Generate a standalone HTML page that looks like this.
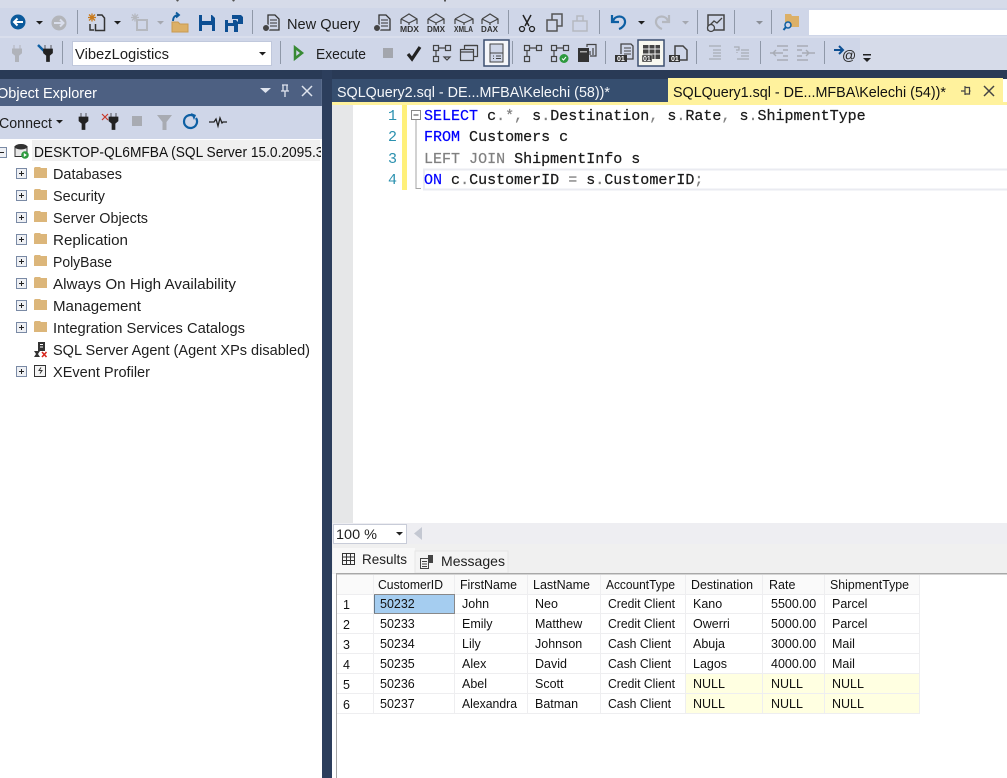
<!DOCTYPE html>
<html><head><meta charset="utf-8"><title>SSMS</title>
<style>
html,body{margin:0;padding:0;background:#fff;overflow:hidden}
svg{display:block}
text{font-family:"Liberation Sans",sans-serif;fill:#1e1e1e;white-space:pre}
.t{font-size:14.5px}
.g{font-size:12.5px;fill:#111}
.m{font-family:"Liberation Mono",monospace;font-size:15.03px;stroke:#000;stroke-width:.2px}
.k{fill:#0000ff;stroke:#0000ff}.y{fill:#808080;stroke:#808080}
.n{font-family:"Liberation Mono",monospace;font-size:15px;fill:#2b91af}
.o{font-size:7px;font-weight:bold;fill:#fff}
</style></head><body>
<svg width="1007" height="778" viewBox="0 0 1007 778" xmlns="http://www.w3.org/2000/svg">
<!-- chrome backgrounds -->
<rect width="1007" height="778" fill="#fff"/>
<rect width="1007" height="8" fill="#d6dbe9"/>
<path d="M176 0l1 1.500h1l1-1.500M232 0l1 1.500h1l1-1.500M444 0h2v1.500h-2z" fill="#555"/>
<rect y="8" width="1007" height="29" fill="#cfd6e8"/>
<rect y="37" width="1007" height="33" fill="#cfd6e8"/>
<rect y="36" width="1007" height="2" fill="#d9deec"/>
<rect x="860" y="38" width="147" height="32" fill="#d6dbe9"/>
<rect y="70" width="1007" height="9" fill="#293a56"/>
<rect x="322" y="70" width="10" height="708" fill="#2c3e5c"/>
<rect x="809" y="10" width="198" height="25" fill="#fff"/>

<!-- toolbar 1 -->
<circle cx="18" cy="22" r="7.500" fill="#0b5a9c"/><path d="M23 22H14M17.500 18.500L14 22l3.500 3.500" stroke="#fff" stroke-width="2" fill="none"/>
<path d="M36 21h7l-3.500 3.500z" fill="#1e1e1e"/>
<circle cx="59" cy="23" r="7.500" fill="#b3b5ba"/><path d="M54 23h9M60 19.500l3.500 3.500-3.500 3.500" stroke="#d9deec" stroke-width="2" fill="none"/>
<rect x="77" y="10" width="1" height="24" fill="#8f98a8"/>
<path d="M92 13.500v8M88 17.500h8M89 14.500l6 6M95 14.500l-6 6" stroke="#c97a1a" stroke-width="1.300"/>
<path d="M97 15h5l2.500 3v12.500h-9V24M90 24v6h4" stroke="#333" stroke-width="1.500" fill="none"/>
<path d="M114 21h7l-3.500 3.500z" fill="#1e1e1e"/>
<path d="M135 13.500v8M131 17.500h8M132 14.500l6 6M138 14.500l-6 6" stroke="#b5b8bf" stroke-width="1.300"/>
<rect x="137" y="20" width="10" height="10" fill="none" stroke="#b5b8bf" stroke-width="2"/>
<path d="M157 21h7l-3.500 3.500z" fill="#a5a8b0"/>
<path d="M172 22h6l2 2h8v8h-16z" fill="#dcb067" stroke="#c89a50"/>
<path d="M173 21c0-4 2-6 6-6M176 12.500l3 2.500-3 2.500" stroke="#0b5a9c" stroke-width="1.800" fill="none"/>
<path d="M199 15h13l3 3v13h-16z" fill="#0d4f93"/><rect x="202" y="15" width="9" height="6" fill="#cfd6e8"/><rect x="202" y="25" width="10" height="6" fill="#cfd6e8"/>
<path d="M225 20h11l2 2v10h-13z" fill="#0d4f93"/><rect x="228" y="26" width="6" height="6" fill="#cfd6e8"/><rect x="228" y="20" width="5" height="3" fill="#cfd6e8"/>
<path d="M232 15h9l2 2v7h-5v-5h-6z" fill="#0d4f93"/>
<rect x="252" y="10" width="1" height="24" fill="#8f98a8"/>
<path d="M268 15h7l4 4v11h-11z" fill="none" stroke="#333" stroke-width="1.300"/><path d="M270 20h7M270 23h7M270 26h7" stroke="#333"/>
<ellipse cx="266" cy="28" rx="3.500" ry="3.500" fill="#444" stroke="#cfd6e8"/>
<text class="t" x="287" y="29" textLength="73" lengthAdjust="spacingAndGlyphs">New Query</text>
<path d="M379 15h7l4 4v11h-11z" fill="none" stroke="#333" stroke-width="1.300"/><path d="M381 20h7M381 23h7M381 26h7" stroke="#333"/>
<ellipse cx="377" cy="28" rx="3.500" ry="3.500" fill="#444" stroke="#cfd6e8"/>
<g fill="none" stroke="#444" stroke-width="1.200">
<path d="M401 19l8-5 8 5v5M401 19v5M401 19l8 4 8-4M409 23v2"/>
<path d="M428 19l8-5 8 5v5M428 19v5M428 19l8 4 8-4M436 23v2"/>
<path d="M455 19l9-5 9 5v5M455 19v5M455 19l9 4 9-4M464 23v2"/>
<path d="M482 19l8-5 8 5v5M482 19v5M482 19l8 4 8-4M490 23v2"/>
</g>
<g font-weight="bold"><text x="400" y="32" font-size="8" textLength="19" lengthAdjust="spacingAndGlyphs" style="fill:#333">MDX</text>
<text x="427" y="32" font-size="8" textLength="18" lengthAdjust="spacingAndGlyphs" style="fill:#333">DMX</text>
<text x="454" y="32" font-size="8" textLength="19" lengthAdjust="spacingAndGlyphs" style="fill:#333">XMLA</text>
<text x="481" y="32" font-size="8" textLength="17" lengthAdjust="spacingAndGlyphs" style="fill:#333">DAX</text></g>
<rect x="508" y="10" width="1" height="24" fill="#8f98a8"/>
<path d="M523 15l6 11M531 15l-6 11" stroke="#222" stroke-width="1.500"/><circle cx="522" cy="29" r="2.500" fill="none" stroke="#222" stroke-width="1.300"/><circle cx="532" cy="29" r="2.500" fill="none" stroke="#222" stroke-width="1.300"/>
<path d="M552 20v-6h10v12h-5" fill="none" stroke="#555" stroke-width="1.500"/><rect x="547" y="20" width="10" height="11" fill="none" stroke="#555" stroke-width="1.500"/>
<path d="M573 21h14v10h-14zM577 21v-5h6v5" fill="none" stroke="#b5b8bf" stroke-width="1.500"/>
<rect x="599" y="10" width="1" height="24" fill="#8f98a8"/>
<path d="M612 15v7h7M613 21c2-6 11-6 12 0 .500 4-3 7-6 8" fill="none" stroke="#0d5fa3" stroke-width="2.200"/>
<path d="M638 21h7l-3.500 3.500z" fill="#1e1e1e"/>
<path d="M669 15v7h-7M668 21c-2-6-11-6-12 0-.500 4 3 7 6 8" fill="none" stroke="#b5b8bf" stroke-width="2.200"/>
<path d="M682 21h7l-3.500 3.500z" fill="#a5a8b0"/>
<rect x="697" y="10" width="1" height="24" fill="#8f98a8"/>
<rect x="708" y="15" width="16" height="15" fill="none" stroke="#444" stroke-width="1.500"/><path d="M710 25l4-4 3 2 5-5" fill="none" stroke="#444" stroke-width="1.300"/><circle cx="711" cy="28" r="3.500" fill="#cfd6e8" stroke="#444" stroke-width="1.300"/>
<rect x="734" y="10" width="1" height="24" fill="#8f98a8"/>
<path d="M756 21h7l-3.500 3.500z" fill="#8a8e96"/>
<rect x="771" y="10" width="1" height="24" fill="#8f98a8"/>
<path d="M785 14h6l1 2h7v11h-14z" fill="#dcb067"/><circle cx="788" cy="25" r="3" fill="#cfd6e8" stroke="#0d5fa3" stroke-width="1.500"/><path d="M786 27l-2.500 3" stroke="#0d5fa3" stroke-width="2"/>

<!-- toolbar 2 -->
<path d="M14 45v4M20 45v4M12.500 49h9v4l-3 2.500v6h-3v-6l-3-2.500z" fill="#b0b3ba" stroke="#b0b3ba"/>
<path d="M38 45l7 7" stroke="#0d5fa3" stroke-width="2.500"/><path d="M45 45v4M51 45v4M43.500 49h9v4l-3 2.500v6h-3v-6l-3-2.500z" fill="#222" stroke="#222" stroke-width=".7"/>
<rect x="62" y="41" width="1" height="23" fill="#8f98a8"/>
<rect x="72.500" y="41.500" width="199" height="24" fill="#fff" stroke="#c0c8dc"/>
<text class="t" x="75" y="59" textLength="94" lengthAdjust="spacingAndGlyphs">VibezLogistics</text>
<path d="M259 52h7l-3.500 3.500z" fill="#1e1e1e"/>
<rect x="280" y="41" width="1" height="23" fill="#8f98a8"/>
<path d="M295 47.500l7 5.500-7 5.500z" fill="none" stroke="#388a34" stroke-width="2.500"/>
<text class="t" x="316" y="59" textLength="50" lengthAdjust="spacingAndGlyphs">Execute</text>
<rect x="383" y="48" width="10" height="10" fill="#a3a6ad"/>
<path d="M408 54l4 5 8-12" fill="none" stroke="#222" stroke-width="3.200"/>
<g fill="none" stroke="#444" stroke-width="1.200">
<rect x="433.500" y="45.500" width="5" height="5"/><rect x="445.500" y="45.500" width="5" height="5"/><rect x="433.500" y="56.500" width="5" height="5"/><path d="M439 48h6M436 51v5M444 57h6l-3 3z"/>
<rect x="464.500" y="45.500" width="13" height="11"/><rect x="460.500" y="49.500" width="13" height="11" fill="#cfd6e8"/><path d="M461 52h12M465 45.500h12"/>
</g>
<rect x="484" y="40" width="25" height="26" fill="#f5f6fa" stroke="#3c4f70" stroke-width="1.500"/>
<rect x="490" y="44" width="13" height="18" fill="#cfd6e8" stroke="#444"/><path d="M490 53h13M493 56h1M493 58.500h1M496 56h5M496 58.500h5" stroke="#444"/>
<rect x="512" y="41" width="1" height="23" fill="#8f98a8"/>
<g fill="none" stroke="#444" stroke-width="1.200">
<rect x="524.500" y="45.500" width="5" height="5"/><rect x="536.500" y="45.500" width="5" height="5"/><rect x="524.500" y="56.500" width="5" height="5"/><path d="M530 48h6M527 51v5"/>
<rect x="551.500" y="45.500" width="5" height="5"/><rect x="563.500" y="45.500" width="5" height="5"/><rect x="551.500" y="56.500" width="5" height="5"/><path d="M557 48h6M554 51v5"/>
<path d="M587 47v-2.500h9v11.500h-6M590 55v-4M593 55v-7"/>
</g>
<circle cx="564" cy="58.500" r="4.500" fill="#2e9a3e"/><path d="M562 58.500l1.500 1.500 2.500-3" stroke="#fff" fill="none"/>
<rect x="578" y="48" width="11" height="14" fill="#333"/><rect x="580" y="51" width="7" height="1.500" fill="#aaa"/>
<rect x="605" y="41" width="1" height="23" fill="#8f98a8"/>
<path d="M621 54v-10h10l2 2v13h-6" fill="none" stroke="#444" stroke-width="1.300"/><path d="M624 48h7M624 51h7M624 54h7" stroke="#444"/>
<rect x="615" y="55" width="12" height="7" fill="#333"/><text class="o" x="617" y="61">01</text>
<rect x="638" y="40" width="26" height="26" fill="#f8f8f0" stroke="#3c4f70" stroke-width="1.500"/>
<rect x="643" y="45" width="17" height="14" fill="#444"/><path d="M643 49h17M643 54h17M649 45v14M655 45v14" stroke="#eee"/>
<rect x="642" y="55" width="10" height="7" fill="#333" stroke="#f8f8f0" stroke-width=".5"/><text class="o" x="643" y="61">01</text>
<path d="M675 55v-9h8l4 4v10h-7" fill="none" stroke="#444" stroke-width="1.500"/><rect x="669" y="55" width="11" height="7" fill="#333"/><text class="o" x="671" y="61">01</text>
<rect x="696" y="41" width="1" height="23" fill="#8f98a8"/>
<path d="M709 46h12M713 50h8M713 53h8M713 56h8M709 59h12" stroke="#a8acb5" stroke-width="1.200"/>
<path d="M734 47h5v3h-3M737 52v1M741 50h8M741 53h8M741 56h8M737 59h12" stroke="#a8acb5" stroke-width="1.200" fill="none"/>
<rect x="760" y="41" width="1" height="23" fill="#8f98a8"/>
<path d="M777 46h11M783 50h5M770 53h7M783 56h5M777 60h11M776 50l-3 3 3 3M773 53h10" stroke="#a8acb5" stroke-width="1.400" fill="none"/>
<path d="M797 46h11M797 50h5M808 53h7M797 56h5M797 60h11M806 50l3 3-3 3M802 53h7" stroke="#a8acb5" stroke-width="1.400" fill="none"/>
<rect x="824" y="41" width="1" height="23" fill="#8f98a8"/>
<path d="M834 50h9M839 46l4 4-4 4" stroke="#0d4f93" stroke-width="2" fill="none"/>
<text x="842" y="60" font-size="14" style="fill:#222">@</text>
<rect x="863" y="54" width="8" height="1.500" fill="#222"/><path d="M863 58h8l-4 4z" fill="#222"/>

<!-- Object Explorer -->
<rect y="79" width="322" height="27" fill="#4d6082"/>
<rect x="321" y="79" width="1" height="60" fill="#5a6c8c"/>
<text x="-3" y="98" font-size="15" textLength="100" lengthAdjust="spacingAndGlyphs" style="fill:#fff">Object Explorer</text>
<path d="M260 88h11l-5.500 5z" fill="#dfe4ee"/>
<path d="M282 85h6M283 85v6M287 85v6M281 91h8M285 91v6" stroke="#dfe4ee" stroke-width="1.300" fill="none"/>
<path d="M302 86l10 10M312 86l-10 10" stroke="#dfe4ee" stroke-width="1.500"/>
<rect y="106" width="322" height="33" fill="#cfd6e8"/>
<text class="t" x="-1" y="128" textLength="53" lengthAdjust="spacingAndGlyphs">Connect</text>
<path d="M56 120h7l-3.500 3.500z" fill="#1e1e1e"/>
<path d="M81 113v4M86 113v4M79 117h9v4l-3 2.500v6h-3v-6l-3-2.500z" fill="#222" stroke="#222" stroke-width=".7"/>
<path d="M102 114l6 6M108 114l-6 6" stroke="#c8382a" stroke-width="1.200"/>
<path d="M111 113v4M116 113v4M109 117h9v4l-3 2.500v6h-3v-6l-3-2.500z" fill="#222" stroke="#222" stroke-width=".7"/>
<rect x="132" y="116" width="10" height="10" fill="#a8abb2"/>
<path d="M157 115h15l-5.500 7v8h-4v-8z" fill="#a8abb2"/>
<path d="M196 118a6.500 6.500 0 1 1-3-2.500" fill="none" stroke="#0d5fa3" stroke-width="2.200"/><path d="M191 113l5 2-2 5z" fill="#0d5fa3"/>
<path d="M209 122h5l2-3 2 7 2-8 2 5 1-1h4" fill="none" stroke="#222" stroke-width="1.300"/>

<!-- tree -->
<rect y="139" width="321" height="639" fill="#fff"/>
<rect x="32" y="140" width="288" height="21" fill="#f0f0f0"/>
<rect x="-3.500" y="147.500" width="10" height="10" fill="#eef0f4" stroke="#7a8aa5"/><path d="M-1 152.500h5" stroke="#222"/>
<ellipse cx="21" cy="146.500" rx="6" ry="2.500" fill="#333"/><rect x="15" y="146.500" width="12" height="10" fill="#e8e8e8" stroke="#333"/><ellipse cx="21" cy="147" rx="6" ry="2.500" fill="#333"/>
<circle cx="25" cy="155" r="3.800" fill="#2e9a3e"/><path d="M23.800 153v4l3-2z" fill="#fff"/>
<svg x="34" y="140" width="287" height="22" overflow="hidden"><text x="0" y="17" font-size="14.5" textLength="294" lengthAdjust="spacingAndGlyphs" style="fill:#111">DESKTOP-QL6MFBA (SQL Server 15.0.2095.3)</text></svg>

<g fill="#eef0f4" stroke="#7a8aa5">
<rect x="16.500" y="168.500" width="10" height="10"/><rect x="16.500" y="190.500" width="10" height="10"/><rect x="16.500" y="212.500" width="10" height="10"/><rect x="16.500" y="234.500" width="10" height="10"/><rect x="16.500" y="256.500" width="10" height="10"/><rect x="16.500" y="278.500" width="10" height="10"/><rect x="16.500" y="300.500" width="10" height="10"/><rect x="16.500" y="322.500" width="10" height="10"/><rect x="16.500" y="366.500" width="10" height="10"/>
</g>
<path d="M19 173.500h5M21.500 171v5M19 195.500h5M21.500 193v5M19 217.500h5M21.500 215v5M19 239.500h5M21.500 237v5M19 261.500h5M21.500 259v5M19 283.500h5M21.500 281v5M19 305.500h5M21.500 303v5M19 327.500h5M21.500 325v5M19 371.500h5M21.500 369v5" stroke="#222"/>
<g fill="#dcb67a">
<path d="M34 168l1-1h5l1 1h6v10H34z"/><path d="M34 190l1-1h5l1 1h6v10H34z"/><path d="M34 212l1-1h5l1 1h6v10H34z"/><path d="M34 234l1-1h5l1 1h6v10H34z"/><path d="M34 256l1-1h5l1 1h6v10H34z"/><path d="M34 278l1-1h5l1 1h6v10H34z"/><path d="M34 300l1-1h5l1 1h6v10H34z"/><path d="M34 322l1-1h5l1 1h6v10H34z"/>
</g>
<text class="t" x="53" y="179" textLength="69" lengthAdjust="spacingAndGlyphs">Databases</text>
<text class="t" x="53" y="201" textLength="52" lengthAdjust="spacingAndGlyphs">Security</text>
<text class="t" x="53" y="223" textLength="95" lengthAdjust="spacingAndGlyphs">Server Objects</text>
<text class="t" x="53" y="245" textLength="75" lengthAdjust="spacingAndGlyphs">Replication</text>
<text class="t" x="53" y="267" textLength="59" lengthAdjust="spacingAndGlyphs">PolyBase</text>
<text class="t" x="53" y="289" textLength="183" lengthAdjust="spacingAndGlyphs">Always On High Availability</text>
<text class="t" x="53" y="311" textLength="88" lengthAdjust="spacingAndGlyphs">Management</text>
<text class="t" x="53" y="333" textLength="192" lengthAdjust="spacingAndGlyphs">Integration Services Catalogs</text>
<text class="t" x="53" y="355" textLength="257" lengthAdjust="spacingAndGlyphs">SQL Server Agent (Agent XPs disabled)</text>
<text class="t" x="53" y="377" textLength="97" lengthAdjust="spacingAndGlyphs">XEvent Profiler</text>
<rect x="38" y="342" width="7" height="9" fill="#333"/><path d="M40 344.500h3M40 347h3" stroke="#fff"/>
<path d="M34 351h6l-2 3 2 3h-6l2-3z" fill="#333"/>
<path d="M42 352l4.500 5M46.500 352l-4.500 5" stroke="#d8281e" stroke-width="1.600"/>
<rect x="34.500" y="365.500" width="11" height="11" fill="#f4f4f4" stroke="#333"/><path d="M41 367.500l-2 3h3l-2 3" fill="none" stroke="#333"/>

<!-- tabs -->
<rect x="332" y="79" width="336" height="23" fill="#364e6f"/>
<text class="t" x="337" y="97" textLength="273" lengthAdjust="spacingAndGlyphs" style="fill:#f5f7fa">SQLQuery2.sql - DE...MFBA\Kelechi (58))*</text>
<rect x="668" y="78" width="335" height="27" fill="#fff29d"/>
<rect x="332" y="102" width="675" height="3" fill="#fff29d"/>
<text class="t" x="673" y="97" textLength="273" lengthAdjust="spacingAndGlyphs" style="fill:#111">SQLQuery1.sql - DE...MFBA\Kelechi (54))*</text>
<path d="M961 91h4M965 87.500h4.500v6.500h-4.500zM965 86v9M969.500 91h1" fill="none" stroke="#444" stroke-width="1.200"/>
<path d="M984 86l10 10M994 86l-10 10" stroke="#444" stroke-width="1.500"/>

<!-- editor -->
<rect x="332" y="105" width="21" height="418" fill="#e6e7e8"/>
<rect x="402" y="105" width="5" height="85" fill="#fff07a"/>
<text class="n" x="388" y="120">1</text><text class="n" x="388" y="141">2</text><text class="n" x="388" y="163">3</text><text class="n" x="388" y="184">4</text>
<rect x="424" y="169.500" width="584" height="20" fill="none" stroke="#eaebf1" stroke-width="2"/>
<rect x="411.500" y="110.500" width="9" height="9" fill="#fff" stroke="#888"/><path d="M413.500 115h5" stroke="#444"/>
<path d="M416 120v68.500h5" fill="none" stroke="#a5a5a5"/>
<text class="m" x="424" y="120"><tspan class="k">SELECT</tspan> c<tspan class="y">.*,</tspan> s<tspan class="y">.</tspan>Destination<tspan class="y">,</tspan> s<tspan class="y">.</tspan>Rate<tspan class="y">,</tspan> s<tspan class="y">.</tspan>ShipmentType</text>
<text class="m" x="424" y="141"><tspan class="k">FROM</tspan> Customers c</text>
<text class="m" x="424" y="163"><tspan class="y">LEFT JOIN</tspan> ShipmentInfo s</text>
<text class="m" x="424" y="184"><tspan class="k">ON</tspan> c<tspan class="y">.</tspan>CustomerID <tspan class="y">=</tspan> s<tspan class="y">.</tspan>CustomerID<tspan class="y">;</tspan></text>

<!-- zoom strip -->
<rect x="332" y="523" width="675" height="21" fill="#eeeef2"/>
<rect x="333.500" y="524.500" width="73" height="19" fill="#fff" stroke="#c8ccd8"/>
<text x="336" y="539" font-size="14" textLength="41" lengthAdjust="spacingAndGlyphs">100 %</text>
<path d="M396 532h7l-3.500 3.500z" fill="#222"/>
<path d="M422 527v13l-8-6.500z" fill="#c4c8d2"/>
<rect x="332" y="544" width="675" height="30" fill="#f0f0f0"/>
<rect x="333" y="548" width="82" height="25" fill="#f8f8f8"/>
<rect x="415" y="551" width="93" height="22" fill="#f4f4f4" stroke="#e6e6e6"/>
<rect x="342.500" y="553.500" width="12" height="11" fill="none" stroke="#333"/><path d="M343 557h11M343 560.500h11M346.500 554v10M350.500 554v10" stroke="#333"/>
<text x="362" y="564" font-size="14" textLength="45" lengthAdjust="spacingAndGlyphs">Results</text>
<rect x="420.500" y="558.500" width="8" height="10" fill="#f4f4f4" stroke="#444"/><path d="M422 561.500h5M422 564h5M422 566.500h5" stroke="#444"/><rect x="428" y="555" width="5" height="8" fill="#444"/>
<text x="441" y="566" font-size="14" textLength="64" lengthAdjust="spacingAndGlyphs">Messages</text>

<!-- grid -->
<rect x="336" y="573" width="671" height="205" fill="#fff"/>
<rect x="336" y="573" width="671" height="1.500" fill="#a8a8a8"/>
<rect x="336" y="573" width="1" height="205" fill="#a8a8a8"/>
<rect x="337" y="575" width="583" height="19" fill="#fafafa"/>
<rect x="686" y="674" width="234" height="40" fill="#ffffe1"/>
<rect x="374" y="594" width="81" height="20" fill="#a5cdf0"/>
<g stroke="#eeeef0" stroke-width="1">
<path d="M337 594.500h583M337 613.500h583M337 633.500h583M337 653.500h583M337 673.500h583M337 693.500h583M337 713.500h583"/>
<path d="M373.500 575v139M454.500 575v139M527.500 575v139M600.500 575v139M685.500 575v139M762.500 575v139M824.500 575v139M919.500 575v139"/>
</g>
<rect x="374.500" y="594.500" width="80" height="19" fill="none" stroke="#222" stroke-dasharray="1 1"/>
<text class="g" x="378" y="589" textLength="65" lengthAdjust="spacingAndGlyphs">CustomerID</text>
<text class="g" x="460" y="589" textLength="57" lengthAdjust="spacingAndGlyphs">FirstName</text>
<text class="g" x="533" y="589" textLength="57" lengthAdjust="spacingAndGlyphs">LastName</text>
<text class="g" x="606" y="589" textLength="69" lengthAdjust="spacingAndGlyphs">AccountType</text>
<text class="g" x="691" y="589" textLength="62" lengthAdjust="spacingAndGlyphs">Destination</text>
<text class="g" x="769" y="589">Rate</text>
<text class="g" x="830" y="589" textLength="79" lengthAdjust="spacingAndGlyphs">ShipmentType</text>
<text class="g" x="343" y="609">1</text><text class="g" x="343" y="629">2</text><text class="g" x="343" y="649">3</text><text class="g" x="343" y="669">4</text><text class="g" x="343" y="689">5</text><text class="g" x="343" y="709">6</text>
<text class="g" x="380" y="608">50232</text><text class="g" x="462" y="608">John</text><text class="g" x="535" y="608">Neo</text><text class="g" x="608" y="608" textLength="67" lengthAdjust="spacingAndGlyphs">Credit Client</text><text class="g" x="693" y="608">Kano</text><text class="g" x="771" y="608">5500.00</text><text class="g" x="832" y="608">Parcel</text>
<text class="g" x="380" y="628">50233</text><text class="g" x="462" y="628">Emily</text><text class="g" x="535" y="628">Matthew</text><text class="g" x="608" y="628" textLength="67" lengthAdjust="spacingAndGlyphs">Credit Client</text><text class="g" x="693" y="628">Owerri</text><text class="g" x="771" y="628">5000.00</text><text class="g" x="832" y="628">Parcel</text>
<text class="g" x="380" y="648">50234</text><text class="g" x="462" y="648">Lily</text><text class="g" x="535" y="648">Johnson</text><text class="g" x="608" y="648" textLength="63" lengthAdjust="spacingAndGlyphs">Cash Client</text><text class="g" x="693" y="648">Abuja</text><text class="g" x="771" y="648">3000.00</text><text class="g" x="832" y="648">Mail</text>
<text class="g" x="380" y="668">50235</text><text class="g" x="462" y="668">Alex</text><text class="g" x="535" y="668">David</text><text class="g" x="608" y="668" textLength="63" lengthAdjust="spacingAndGlyphs">Cash Client</text><text class="g" x="693" y="668">Lagos</text><text class="g" x="771" y="668">4000.00</text><text class="g" x="832" y="668">Mail</text>
<text class="g" x="380" y="688">50236</text><text class="g" x="462" y="688">Abel</text><text class="g" x="535" y="688">Scott</text><text class="g" x="608" y="688" textLength="67" lengthAdjust="spacingAndGlyphs">Credit Client</text><text class="g" x="693" y="688">NULL</text><text class="g" x="771" y="688">NULL</text><text class="g" x="832" y="688">NULL</text>
<text class="g" x="380" y="708">50237</text><text class="g" x="462" y="708" textLength="55" lengthAdjust="spacingAndGlyphs">Alexandra</text><text class="g" x="535" y="708">Batman</text><text class="g" x="608" y="708" textLength="63" lengthAdjust="spacingAndGlyphs">Cash Client</text><text class="g" x="693" y="708">NULL</text><text class="g" x="771" y="708">NULL</text><text class="g" x="832" y="708">NULL</text>
</svg>
</body></html>
